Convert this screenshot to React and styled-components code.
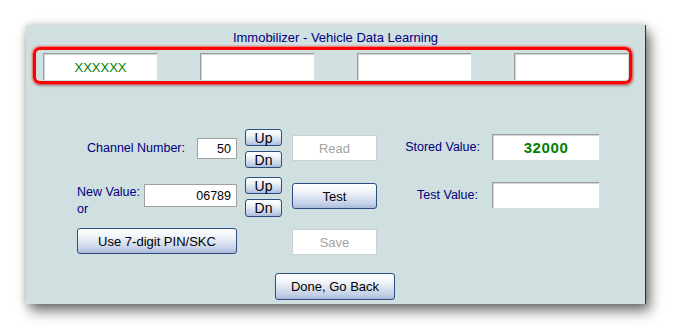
import React from "react";
import styled, { createGlobalStyle } from "styled-components";

const GlobalStyle = createGlobalStyle`
  html, body {
    margin: 0;
    padding: 0;
    background: #ffffff;
  }
  body {
    font-family: "Liberation Sans", Arial, sans-serif;
    font-size: 12.5px;
  }
`;

const Page = styled.div`
  width: 673px;
  height: 330px;
  padding: 25px 0 0 26px;
  box-sizing: border-box;
`;

const Panel = styled.div`
  width: 620px;
  height: 279px;
  box-sizing: border-box;
  background: #d0dfdf;
  border-right: 1px solid #2a3646;
  box-shadow: 4px 7px 12px rgba(0, 0, 0, 0.55), 0 0 7px rgba(0, 0, 0, 0.18);
  display: flex;
  flex-direction: column;
  padding-bottom: 4px;
`;

const Title = styled.div`
  margin-top: 6px;
  height: 14px;
  line-height: 14px;
  font-size: 13px;
  text-align: center;
  color: #000080;
`;

const Highlight = styled.div`
  margin: 2px 0 0 7px;
  width: 599px;
  height: 37px;
  box-sizing: border-box;
  border: 3px solid #ff0000;
  border-radius: 7px;
  box-shadow: 0 0 2px 1px rgba(255, 0, 0, 0.55), 1px 2px 3px rgba(0, 0, 0, 0.25);
  padding: 3px 0 0 7px;
  display: flex;
  gap: 43px;
`;

const DataField = styled.div`
  width: ${(p) => p.$w || 114}px;
  height: ${(p) => p.$h || 27}px;
  box-sizing: border-box;
  background: #ffffff;
  border-top: 1px solid #9c9c9c;
  border-left: 1px solid #9c9c9c;
  box-shadow: inset 1px 1px 0 #d4d4d4;
  display: flex;
  align-items: center;
  justify-content: center;
  color: #008000;
  font-weight: ${(p) => (p.$bold ? "bold" : "normal")};
  font-size: ${(p) => (p.$bold ? "15px" : "13px")};
  letter-spacing: ${(p) => (p.$bold ? "0.6px" : "0")};
`;

const Body = styled.div`
  margin: 45px 0 0 51px;
  display: flex;
  align-items: flex-start;
`;

const LeftCol = styled.div`
  width: 205px;
  display: flex;
  flex-direction: column;
`;

const FormRow = styled.div`
  display: flex;
  align-items: ${(p) => (p.$top ? "flex-start" : "center")};
  justify-content: ${(p) => (p.$end ? "flex-end" : "flex-start")};
  margin-top: ${(p) => p.$mt || 0}px;
`;

const Label = styled.div`
  color: #000080;
  line-height: 17px;
  white-space: nowrap;
`;

const LabelBlock = styled.div`
  display: flex;
  flex-direction: column;
  margin-top: 7px;
  width: 67px;
`;

const NumberBox = styled.div`
  width: ${(p) => p.$w}px;
  height: ${(p) => p.$h}px;
  box-sizing: border-box;
  background: #ffffff;
  border: 1px solid #a0a0a0;
  display: flex;
  align-items: center;
  justify-content: flex-end;
  padding-right: 5px;
  color: #000000;
  margin-left: ${(p) => p.$ml || 0}px;
  margin-top: ${(p) => p.$mt || 0}px;
`;

const Stepper = styled.div`
  display: flex;
  flex-direction: column;
  gap: 5px;
  margin-left: 8px;
`;

const XpButton = styled.button`
  width: ${(p) => p.$w}px;
  height: ${(p) => p.$h}px;
  padding: 0;
  box-sizing: border-box;
  border: 1px solid #2d4c82;
  border-radius: 3px;
  background: linear-gradient(#ffffff 0%, #eef2f8 35%, #c6d2e8 80%, #a9bad8 100%);
  font-family: "Liberation Sans", Arial, sans-serif;
  font-size: ${(p) => p.$fs || 13}px;
  color: #000000;
  line-height: 1;
  cursor: default;
  margin-top: ${(p) => p.$mt || 0}px;
`;

const MidCol = styled.div`
  margin: 6px 0 0 10px;
  display: flex;
  flex-direction: column;
`;

const DisabledButton = styled.div`
  width: 85px;
  height: 26px;
  box-sizing: border-box;
  background: #ffffff;
  border: 1px solid #c9d0d4;
  color: #a3a3a3;
  font-size: 13px;
  display: flex;
  align-items: center;
  justify-content: center;
  margin-top: ${(p) => p.$mt || 0}px;
`;

const RightCol = styled.div`
  margin: 5px 0 0 23px;
  display: flex;
  flex-direction: column;
  gap: 22px;
`;

const ValueRow = styled.div`
  display: flex;
  align-items: center;
`;

const ValueLabel = styled.div`
  width: ${(p) => p.$w}px;
  text-align: right;
  color: #000080;
  white-space: nowrap;
  margin-right: ${(p) => p.$mr}px;
`;

const Footer = styled.div`
  margin-top: 18px;
  display: flex;
  justify-content: center;
  padding-right: 1px;
`;

export default function App() {
  return (
    <Page>
      <GlobalStyle />
      <Panel>
        <Title>Immobilizer - Vehicle Data Learning</Title>
        <Highlight>
          <DataField>XXXXXX</DataField>
          <DataField />
          <DataField />
          <DataField />
        </Highlight>

        <Body>
          <LeftCol>
            <FormRow $end>
              <Label>Channel Number:</Label>
              <NumberBox $w={40} $h={21} $ml={12}>
                50
              </NumberBox>
              <Stepper>
                <XpButton $w={37} $h={17} $fs={14}>Up</XpButton>
                <XpButton $w={37} $h={17} $fs={14}>Dn</XpButton>
              </Stepper>
            </FormRow>

            <FormRow $mt={9} $top>
              <LabelBlock>
                <Label>New Value:</Label>
                <Label>or</Label>
              </LabelBlock>
              <NumberBox $w={93} $h={23} $mt={7}>
                06789
              </NumberBox>
              <Stepper>
                <XpButton $w={37} $h={17} $fs={14}>Up</XpButton>
                <XpButton $w={37} $h={18} $fs={14}>Dn</XpButton>
              </Stepper>
            </FormRow>

            <FormRow $mt={10}>
              <XpButton $w={160} $h={26}>Use 7-digit PIN/SKC</XpButton>
            </FormRow>
          </LeftCol>

          <MidCol>
            <DisabledButton>Read</DisabledButton>
            <XpButton $w={85} $h={26} $mt={22}>
              Test
            </XpButton>
            <DisabledButton $mt={20}>Save</DisabledButton>
          </MidCol>

          <RightCol>
            <ValueRow>
              <ValueLabel $w={80} $mr={12}>Stored Value:</ValueLabel>
              <DataField $w={107} $h={26} $bold>
                32000
              </DataField>
            </ValueRow>
            <ValueRow>
              <ValueLabel $w={78} $mr={14}>Test Value:</ValueLabel>
              <DataField $w={107} $h={26} />
            </ValueRow>
          </RightCol>
        </Body>

        <Footer>
          <XpButton $w={120} $h={27}>Done, Go Back</XpButton>
        </Footer>
      </Panel>
    </Page>
  );
}
